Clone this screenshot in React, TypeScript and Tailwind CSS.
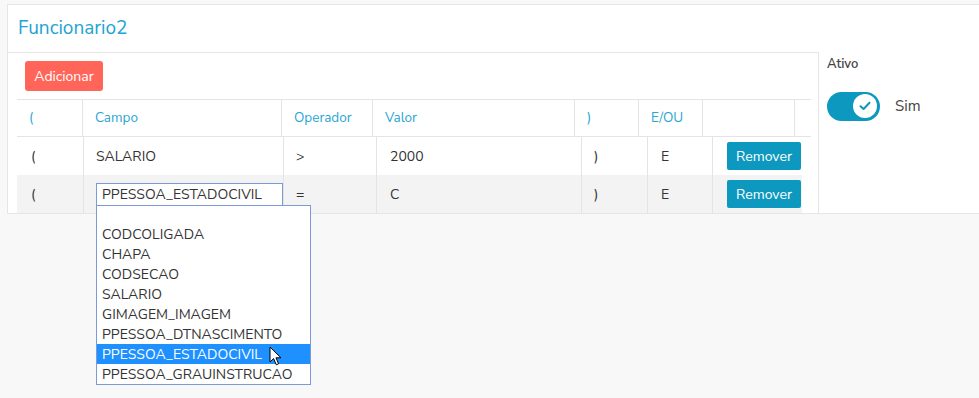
import React from 'react';

const FONT = "font-['Nunito_Sans','Lato','Open_Sans',sans-serif]";

const headCols = [
  { label: '(', w: 'w-[65px]' },
  { label: 'Campo', w: 'w-[199px]' },
  { label: 'Operador', w: 'w-[91px]' },
  { label: 'Valor', w: 'w-[202px]' },
  { label: ')', w: 'w-[64px]' },
  { label: 'E/OU', w: 'w-[64px]' },
  { label: '', w: 'w-[92px]' },
  { label: '', w: 'w-[17px]' },
];

const rows = [
  { campo: 'SALARIO', op: '>', valor: '2000', ou: 'E', editing: false },
  { campo: 'PPESSOA_ESTADOCIVIL', op: '=', valor: 'C', ou: 'E', editing: true },
];

const options = [
  '',
  'CODCOLIGADA',
  'CHAPA',
  'CODSECAO',
  'SALARIO',
  'GIMAGEM_IMAGEM',
  'PPESSOA_DTNASCIMENTO',
  'PPESSOA_ESTADOCIVIL',
  'PPESSOA_GRAUINSTRUCAO',
];

function Cell({ w, children, first, bg }: { w: string; children?: React.ReactNode; first?: boolean; bg?: string }) {
  return (
    <div className={`${w} flex shrink-0 items-center ${first ? '' : 'border-l border-[#e4e4e4]'} ${bg ?? ''}`}>
      {children}
    </div>
  );
}

function RemoveButton() {
  return (
    <button className="ml-[14px] h-[28px] w-[74px] rounded-[2px] bg-[#0d98bf] text-[14px] text-white">Remover</button>
  );
}

function Cursor() {
  return (
    <svg width="14" height="21" viewBox="0 0 14 21" className="absolute left-[269px] top-[346px]">
      <path d="M1 1 L1 16 L4.6 12.6 L7.3 18.8 L9.6 17.8 L7 11.8 L12 11.8 Z" fill="#fff" stroke="#000" strokeWidth="1" strokeLinejoin="round" />
    </svg>
  );
}

export default function App(): React.JSX.Element {
  return (
    <div className={`relative h-[398px] w-[979px] overflow-hidden bg-[#f8f8f8] pl-[7px] pt-[4px] ${FONT}`}>
      <div className="w-[990px] border-y border-l border-[#e6e6e6] bg-white">
        <div className="flex h-[47px] items-center px-[10px] text-[19px] text-[#23a3d3]">Funcionario2</div>

        <div className="flex">
          <div className="h-[161px] w-[811px] border-r border-t border-[#e6e6e6] pl-[9px] pt-[8px]">
            <button className="ml-[8px] h-[30px] w-[78px] rounded-[3px] bg-[#ff6659] text-[14px] text-white">Adicionar</button>

            <div className="mt-[8px] flex h-[38px] w-[794px] border-y border-[#e4e4e4] text-[13.5px] text-[#2aa5d4]">
              {headCols.map((c, i) => (
                <Cell key={i} w={c.w} first={i === 0}>
                  <span className="pl-[12px]">{c.label}</span>
                </Cell>
              ))}
            </div>

            <div className="w-[785px] text-[14px] text-[#333]">
              {rows.map((r, i) => (
                <div key={i} className={`flex h-[38px] ${i === 1 ? 'bg-[#f3f3f3]' : 'bg-white'}`}>
                  <Cell w="w-[66px]" first>
                    <span className="pl-[14px]">(</span>
                  </Cell>
                  <Cell w="w-[200px]">
                    {r.editing ? (
                      <div className="ml-[12px] mt-[1px] flex h-[24px] w-[188px] items-center border border-[#7c9bd6] bg-white pl-[5px]">
                        {r.campo}
                      </div>
                    ) : (
                      <span className="pl-[12px]">{r.campo}</span>
                    )}
                  </Cell>
                  <Cell w="w-[93px]">
                    <span className="pl-[12px]">{r.op}</span>
                  </Cell>
                  <Cell w="w-[205px]">
                    <span className="pl-[13px]">{r.valor}</span>
                  </Cell>
                  <Cell w="w-[66px]">
                    <span className="pl-[12px]">)</span>
                  </Cell>
                  <Cell w="w-[65px]">
                    <span className="pl-[13px]">{r.ou}</span>
                  </Cell>
                  <Cell w="w-[90px]">
                    <RemoveButton />
                  </Cell>
                </div>
              ))}
            </div>
          </div>

          <div className="flex-1 pl-[8px] pt-[3px]">
            <div className="text-[13px] font-semibold text-[#444]">Ativo</div>
            <div className="mt-[17px] flex items-center">
              <div className="flex h-[29px] w-[53px] items-center justify-end rounded-full bg-[#0d98bf] pr-[3px]">
                <div className="flex h-[24px] w-[24px] items-center justify-center rounded-full bg-white">
                  <svg width="12" height="10" viewBox="0 0 12 10">
                    <path d="M1.5 5.2 L4.6 8 L10.5 1.8" fill="none" stroke="#0d98bf" strokeWidth="2" strokeLinecap="round" strokeLinejoin="round" />
                  </svg>
                </div>
              </div>
              <span className="ml-[15px] text-[15px] text-[#444]">Sim</span>
            </div>
          </div>
        </div>
      </div>

      <div className="absolute left-[96px] top-[205px] w-[215px] border border-[#7c9bd6] bg-white text-[14px] text-[#333]">
        {options.map((o, i) => (
          <div
            key={i}
            className={`flex items-center pl-[5px] ${i === 0 ? 'h-[18px]' : 'h-[20px]'} ${o === 'PPESSOA_ESTADOCIVIL' ? 'bg-[#1e90ff] text-white' : ''}`}
          >
            {o}
          </div>
        ))}
      </div>
      <Cursor />
    </div>
  );
}
